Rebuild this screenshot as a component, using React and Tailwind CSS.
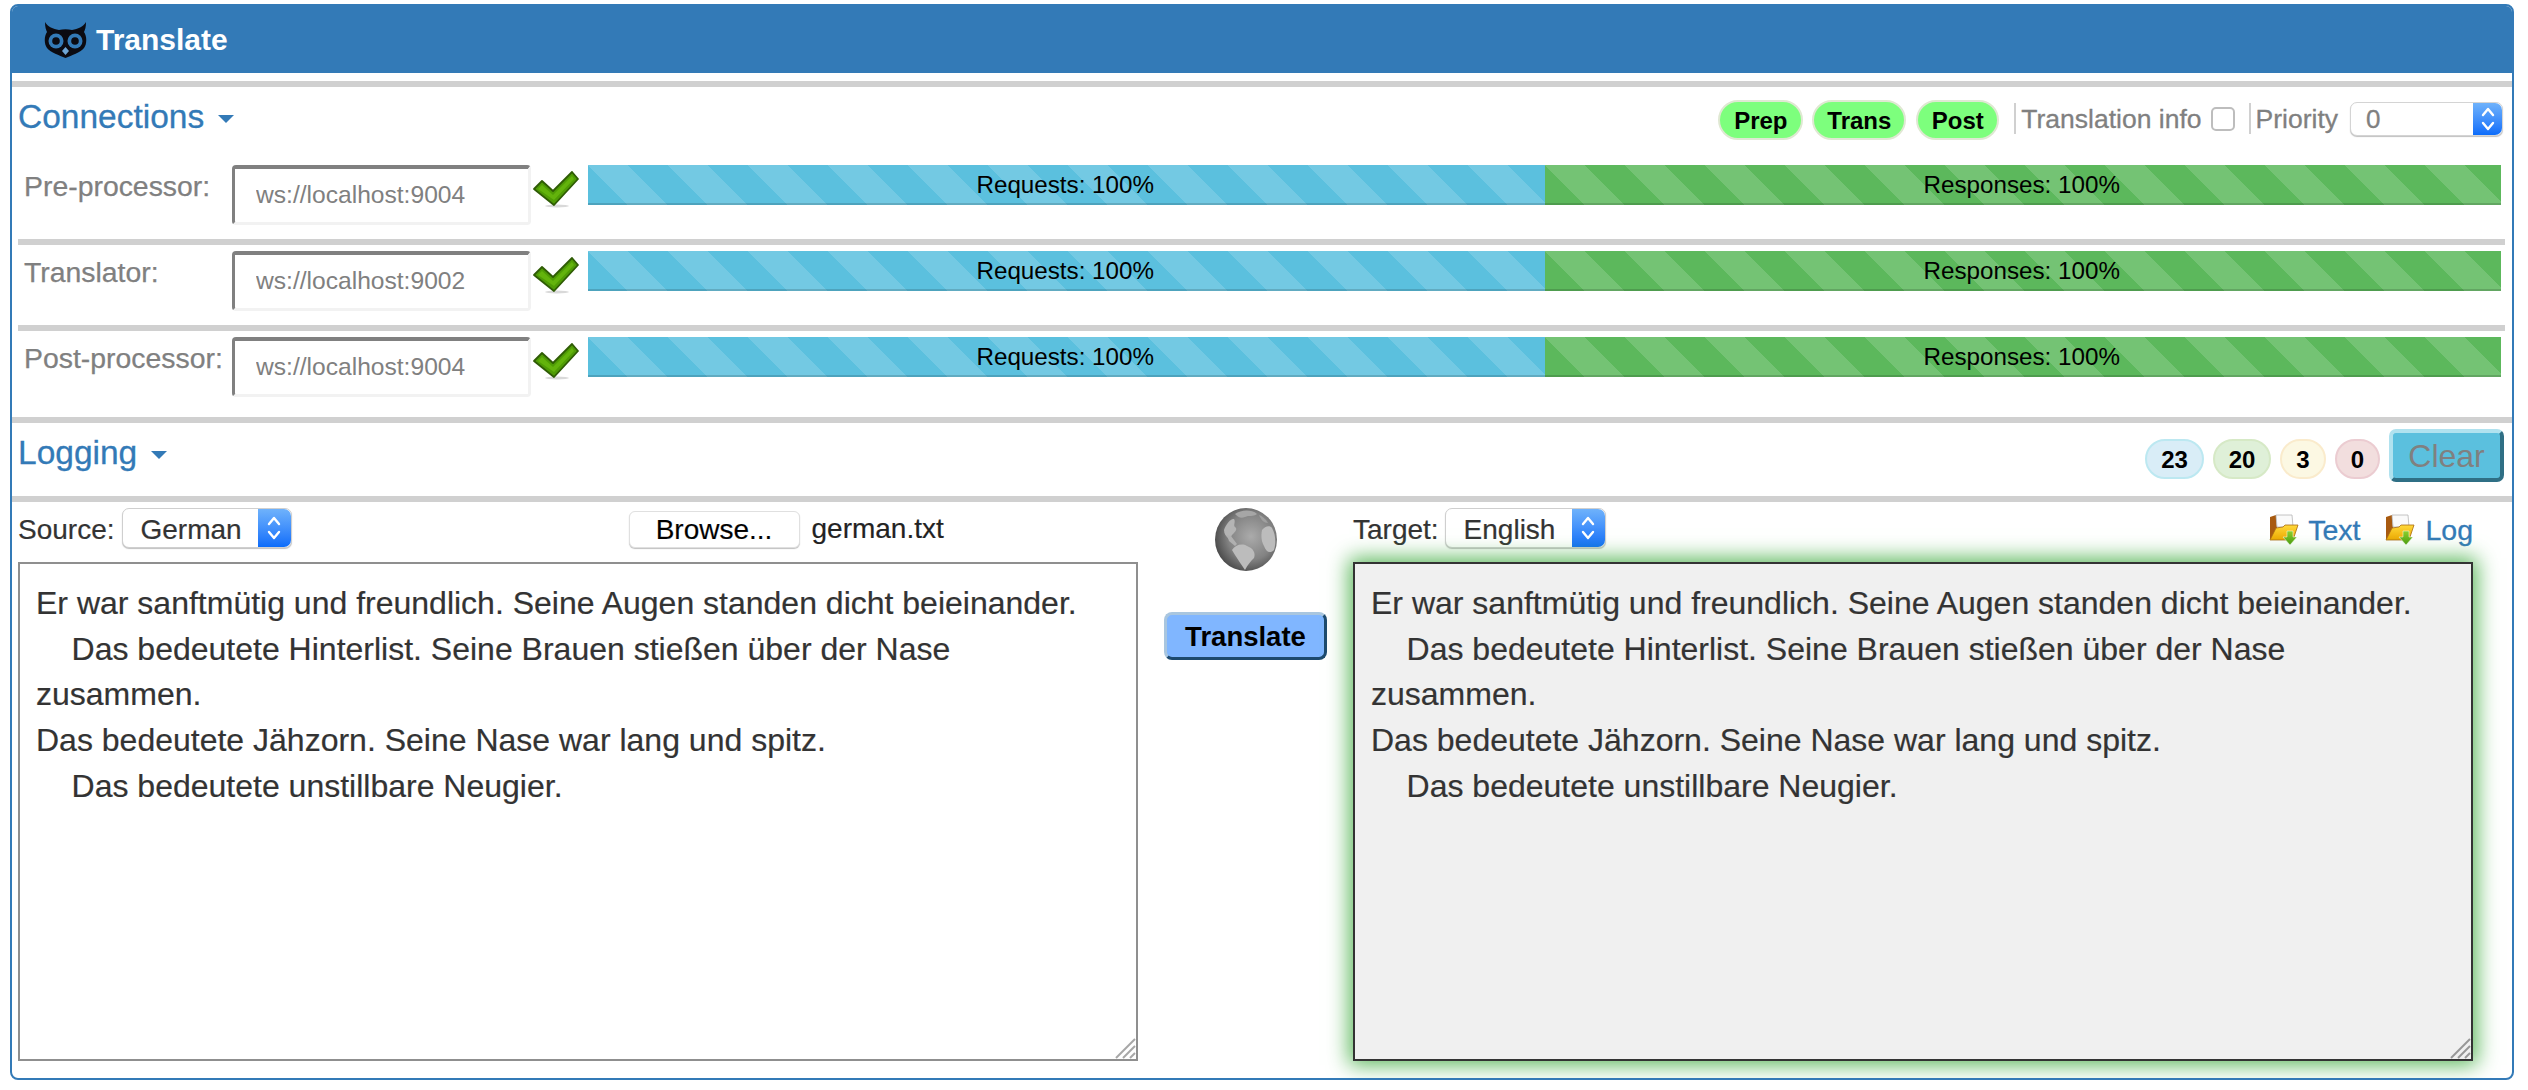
import React from "react";

const TEXT = `Er war sanftmütig und freundlich. Seine Augen standen dicht beieinander.
    Das bedeutete Hinterlist. Seine Brauen stießen über der Nase zusammen.
Das bedeutete Jähzorn. Seine Nase war lang und spitz.
    Das bedeutete unstillbare Neugier.`;

function Owl() {
  return (
    <svg width="43" height="36" viewBox="0 0 43 36" className="shrink-0">
      <path d="M1 0C4 5 9 7 15 8C19 7 24 7 28 8C34 7 39 5 42 0C42 5 41 8 40 10C43 14 43 22 40 26C36 31 28 33 21.500 36C15 33 7 31 3 26C0 22 0 14 3 10C2 8 1 5 1 0Z" fill="#0b0b12" />
      <circle cx="12" cy="19" r="7.500" fill="#337ab7" />
      <circle cx="31" cy="19" r="7.500" fill="#337ab7" />
      <circle cx="12" cy="19" r="3.800" fill="#0b0b12" />
      <circle cx="31" cy="19" r="3.800" fill="#0b0b12" />
      <path d="M21.500 25L25 29L21.500 33L18 29Z" fill="#6ea6d6" />
    </svg>
  );
}

function Check() {
  return (
    <svg width="46" height="37" viewBox="0 0 46 37" className="shrink-0 ml-[2px] mt-[6px]">
      <ellipse cx="24" cy="35" rx="12" ry="1.500" fill="#000" opacity="0.15" />
      <path d="M1 18L9 10L20 20L39 1L45 8L21 34Z" fill="#4f9c05" stroke="#2f5c05" strokeWidth="1.800" strokeLinejoin="round" />
      <path d="M5 18L9 14L20 24L39 5L41 8L21 29Z" fill="#63b30c" />
    </svg>
  );
}

function Globe() {
  return (
    <svg width="62" height="63" viewBox="0 0 62 63">
      <defs>
        <radialGradient id="gl" cx="0.58" cy="0.45" r="0.62">
          <stop offset="0" stopColor="#ababab" />
          <stop offset="0.6" stopColor="#828282" />
          <stop offset="1" stopColor="#454545" />
        </radialGradient>
      </defs>
      <ellipse cx="31" cy="31.500" rx="31" ry="31.500" fill="url(#gl)" />
      <path d="M17 42C20 37 27 35 32 38C38 40 41 45 39 50C36 53 33 56 30 62C26 56 22 50 20 47Z" fill="#bcbcbc" />
      <path d="M9 22C11 16 16 10 19 11C21 14 18 17 20 19C23 21 20 24 18 26C15 29 16 31 14 31C11 28 9 26 9 22Z" fill="#b4b4b4" />
      <path d="M12 27L16 28L22 36L20 38L14 33Z" fill="#b0b0b0" />
      <path d="M47 22C50 18 55 17 57 20C61 27 61 36 59 42C55 46 51 44 49 38C46 33 46 27 47 22Z" fill="#bcbcbc" />
      <path d="M20 6C26 2 36 1 42 6C38 9 34 7 30 9C26 11 23 9 20 6Z" fill="#a6a6a6" />
      <path d="M44 7C47 8 51 11 53 15C49 15 46 12 44 7Z" fill="#a0a0a0" />
    </svg>
  );
}

function Folder() {
  return (
    <svg width="30" height="32" viewBox="0 0 30 32" className="shrink-0 block">
      <defs>
        <linearGradient id="fy" x1="0" y1="0" x2="0" y2="1">
          <stop offset="0" stopColor="#ffd93b" />
          <stop offset="1" stopColor="#eea800" />
        </linearGradient>
        <linearGradient id="fg" x1="0" y1="0" x2="0" y2="1">
          <stop offset="0" stopColor="#8fd12e" />
          <stop offset="1" stopColor="#4b9a0b" />
        </linearGradient>
      </defs>
      <path d="M1 3L7 1L8 14L2 25L1 25Z" fill="#a85a10" />
      <path d="M7 1H23L24 13H8Z" fill="#fafafa" stroke="#b5b5b5" strokeWidth="0.800" />
      <path d="M7 14L14 13L16 11H29L24 26H1Z" fill="url(#fy)" stroke="#a86a10" strokeWidth="0.800" />
      <path d="M18 17H24V23H28L21 31L14 23H18Z" fill="url(#fg)" stroke="#fff" strokeWidth="0.500" />
    </svg>
  );
}

function Grip({ color }) {
  return (
    <svg width="21" height="21" viewBox="0 0 21 21" className="absolute right-[2px] bottom-[2px]" stroke={color} strokeWidth="2" opacity="0.75">
      <path d="M1 20L20 1" />
      <path d="M8 20L20 8" />
      <path d="M15 20L20 15" />
    </svg>
  );
}

function Stepper({ w }) {
  return (
    <span className={`flex items-center justify-center self-stretch bg-gradient-to-b from-[#6fb2fb] to-[#0a6cfa] rounded-r-[7px] ${w}`}>
      <svg width="16" height="26" viewBox="0 0 16 26" fill="none" stroke="#fff" strokeWidth="2.400" strokeLinecap="round" strokeLinejoin="round">
        <path d="M3 9L8 3L13 9" />
        <path d="M3 17L8 23L13 17" />
      </svg>
    </span>
  );
}

function Caret() {
  return <span className="ml-[14px] mt-[4px] w-0 h-0 border-x-[8px] border-x-transparent border-t-[8px] border-t-[#337ab7]" />;
}

function Rule() {
  return <div className="h-[6px] bg-[#d0d0d0] shrink-0" />;
}

function Bar({ label, kind }) {
  const cls = kind === "info" ? "bg-[#5bc0de]" : "bg-[#5cb85c]";
  return (
    <div className={`flex-1 flex items-center justify-center text-[24.2px] text-black shadow-[inset_0_-2px_0_rgba(0,0,0,0.15)] bg-[linear-gradient(45deg,rgba(255,255,255,0.15)_25%,transparent_25%,transparent_50%,rgba(255,255,255,0.15)_50%,rgba(255,255,255,0.15)_75%,transparent_75%,transparent)] bg-[length:80px_80px] ${cls}`}>
      <span className="-translate-x-[1px]">{label}</span>
    </div>
  );
}

function ConnRow({ label, value, h }) {
  return (
    <div className={`flex items-start mx-[6px] ${h}`}>
      <div className="w-[214px] pl-[6px] pt-[1px] text-[28.4px] leading-[40px] text-[#808080] [-webkit-text-stroke:0.25px_#808080] shrink-0">{label}</div>
      <input
        readOnly
        value={value}
        className="w-[299px] h-[60px] shrink-0 rounded-[4px] border-t-4 border-l-[3px] border-r-[3px] border-b-[3px] border-t-[#808080] border-l-[#808080] border-r-[#f2f2f2] border-b-[#f2f2f2] pl-[21px] pb-[1px] text-[24.6px] text-[#808080] bg-white outline-none"
      />
      <Check />
      <div className="ml-[9px] mr-[5px] flex-1 flex h-[40px]">
        <Bar kind="info" label="Requests: 100%" />
        <Bar kind="success" label="Responses: 100%" />
      </div>
    </div>
  );
}

function Pill({ children, cls }) {
  return (
    <span className={`h-[40px] flex items-center justify-center rounded-full border-2 pt-[2px] text-[24px] font-bold text-black ${cls}`}>
      {children}
    </span>
  );
}

export default function App() {
  return (
    <div className="w-[2528px] h-[1090px] bg-white pt-[4px] pl-[10px] pr-[14px] font-['Liberation_Sans',Arial,sans-serif] overflow-hidden">
      <div className="h-[1076px] border-2 border-[#337ab7] rounded-lg overflow-hidden flex flex-col">
        <header className="h-[67px] shrink-0 bg-[#337ab7] flex items-center pl-[32px] text-white text-[30px] font-bold">
          <Owl />
          <span className="ml-[9px]">Translate</span>
        </header>
        <div className="mt-[8px]"><Rule /></div>

        <section className="h-[330px] shrink-0">
          <div className="h-[78px] flex items-start">
            <a className="ml-[6px] mt-[11px] flex items-center text-[33.5px] leading-[38px] text-[#337ab7] [-webkit-text-stroke:0.3px_#337ab7]">
              Connections
              <Caret />
            </a>
            <div className="ml-auto mr-[9px] mt-[13px] flex items-start text-[26.5px] text-[#808080] [-webkit-text-stroke:0.3px_#808080]">
              <Pill cls="w-[85px] bg-[#7dff7d] border-[#dfe8d2] [-webkit-text-stroke:0]">Prep</Pill>
              <Pill cls="w-[94px] ml-[9px] bg-[#7dff7d] border-[#dfe8d2] [-webkit-text-stroke:0]">Trans</Pill>
              <Pill cls="w-[83px] ml-[10px] bg-[#7dff7d] border-[#dfe8d2] [-webkit-text-stroke:0]">Post</Pill>
              <span className="ml-[15px] mt-[3px] w-[2px] h-[31px] bg-[#d0d0d0]" />
              <span className="ml-[5px] leading-[38px]">Translation info</span>
              <span className="ml-[9px] mt-[7px] w-[24px] h-[24px] rounded-[5px] border-2 border-[#bdbdbd] bg-white" />
              <span className="ml-[14px] mt-[3px] w-[2px] h-[31px] bg-[#d0d0d0]" />
              <span className="ml-[5px] leading-[38px]">Priority</span>
              <span className="ml-[12px] mt-[2px] w-[153px] h-[34px] rounded-[7px] border border-[#d4d4d4] shadow-[0_1px_1px_rgba(0,0,0,0.25)] bg-white flex items-center text-[26px]">
                <span className="flex-1 pl-[15px]">0</span>
                <Stepper w="w-[29px]" />
              </span>
            </div>
          </div>
          <ConnRow label="Pre-processor:" value="ws://localhost:9004" h="h-[74px]" />
          <div className="ml-[6px] mr-[7px]"><Rule /></div>
          <div className="h-[6px]" />
          <ConnRow label="Translator:" value="ws://localhost:9002" h="h-[74px]" />
          <div className="ml-[6px] mr-[7px]"><Rule /></div>
          <div className="h-[6px]" />
          <ConnRow label="Post-processor:" value="ws://localhost:9004" h="h-[80px]" />
        </section>

        <Rule />

        <section className="h-[73px] shrink-0 flex items-start">
          <a className="ml-[6px] mt-[11px] flex items-center text-[33.5px] leading-[38px] text-[#337ab7] [-webkit-text-stroke:0.3px_#337ab7]">
            Logging
            <Caret />
          </a>
          <div className="ml-auto mr-[8px] mt-[6px] flex items-start">
            <Pill cls="mt-[10px] w-[59px] bg-[#d9edf7] border-[#bce8f1]">23</Pill>
            <Pill cls="mt-[10px] ml-[9px] w-[58px] bg-[#dff0d8] border-[#d6e9c6]">20</Pill>
            <Pill cls="mt-[10px] ml-[9px] w-[46px] bg-[#fcf8e3] border-[#faebcc]">3</Pill>
            <Pill cls="mt-[10px] ml-[9px] w-[45px] bg-[#f2dede] border-[#ebccd1]">0</Pill>
            <button className="ml-[9px] w-[115px] h-[53px] rounded-[7px] bg-[#5bc0de] border-4 border-t-[#b0e2ef] border-l-[#b0e2ef] border-r-[#2f6f85] border-b-[#2f6f85] text-[32px] leading-none text-[#808080]">
              Clear
            </button>
          </div>
        </section>

        <Rule />

        <section className="flex-1 flex pl-[6px] pt-[6px] text-[28px] text-[#333] [-webkit-text-stroke:0.2px_#333]">
          <div className="w-[1120px] shrink-0">
            <div className="h-[54px] flex items-start">
              <span className="leading-[44px]">Source:</span>
              <span className="ml-[7px] w-[170px] h-[40px] rounded-[7px] border border-[#cfcfcf] shadow-[0_1px_1px_rgba(0,0,0,0.25)] flex items-center bg-white">
                <span className="flex-1 pl-[18px] pt-[3px]">German</span>
                <Stepper w="w-[33px]" />
              </span>
              <button className="ml-[337px] mt-[3px] w-[171px] h-[37px] rounded-[6px] border border-[#e0e0e0] shadow-[0_1px_1px_rgba(0,0,0,0.25)] bg-white text-black leading-none">
                Browse...
              </button>
              <span className="ml-[12px] leading-[42px] text-[#222]">german.txt</span>
            </div>
            <div className="relative w-[1120px] h-[499px]">
              <textarea
                readOnly
                defaultValue={TEXT}
                className="block w-full h-full resize-none border-2 border-[#8f8f8f] bg-white pl-[16px] pr-[17px] pt-[17px] text-[32px] leading-[45.7px] text-[#333] outline-none whitespace-pre-wrap"
              />
              <Grip color="#8a8a8a" />
            </div>
          </div>

          <div className="w-[215px] shrink-0 flex flex-col items-center [-webkit-text-stroke:0]">
            <Globe />
            <button className="mt-[41px] w-[163px] h-[48px] rounded-[8px] bg-[#80b6ff] border-[3px] border-t-[#a9c6df] border-l-[#a9c6df] border-r-[#1d4a6e] border-b-[#1d4a6e] pt-[2px] text-[27.5px] font-bold text-black leading-none">
              Translate
            </button>
          </div>

          <div className="w-[1120px] shrink-0">
            <div className="h-[54px] flex items-start">
              <span className="leading-[44px]">Target:</span>
              <span className="ml-[6px] w-[161px] h-[40px] rounded-[7px] border border-[#cfcfcf] shadow-[0_1px_1px_rgba(0,0,0,0.25)] flex items-center bg-white">
                <span className="flex-1 pl-[18px] pt-[3px]">English</span>
                <Stepper w="w-[33px]" />
              </span>
              <div className="ml-auto flex items-start text-[28.5px] text-[#337ab7] [-webkit-text-stroke:0.3px_#337ab7] mt-[6px]">
                <Folder />
                <span className="ml-[9px] leading-[32px]">Text</span>
                <span className="ml-[25px]"><Folder /></span>
                <span className="ml-[10px] leading-[32px]">Log</span>
              </div>
            </div>
            <div className="relative w-[1120px] h-[499px]">
              <textarea
                readOnly
                defaultValue={TEXT}
                className="block w-full h-full resize-none border-2 border-[#333] bg-[#f0f0f0] pl-[16px] pr-[17px] pt-[17px] text-[32px] leading-[45.7px] text-[#333] outline-none whitespace-pre-wrap shadow-[0_0_20px_4px_#5cb85c]"
              />
              <Grip color="#7a7a7a" />
            </div>
          </div>
        </section>
      </div>
    </div>
  );
}
